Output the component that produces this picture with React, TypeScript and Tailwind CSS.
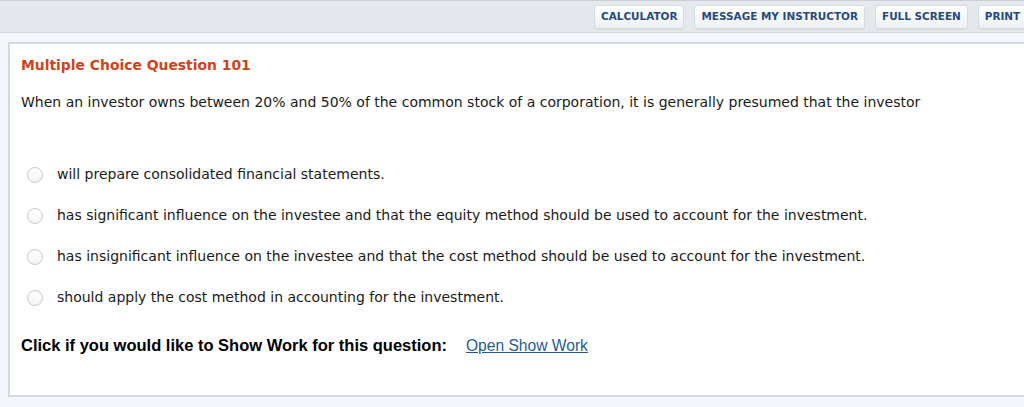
import React from "react";

const verdana = { fontFamily: '"DejaVu Sans", Verdana, sans-serif' };

function Btn({ label }: { label: string }) {
  return (
    <div className="h-[24px] px-[6px] flex items-center rounded-[3px] border border-[#d4dae1] bg-gradient-to-b from-[#ffffff] to-[#eef1f4] text-[10.45px] font-bold text-[#284a7e] whitespace-nowrap shrink-0 shadow-[0_1px_0_rgba(0,0,0,0.05)]">
      {label}
    </div>
  );
}

function Option({ text }: { text: string }) {
  return (
    <div className="flex items-center h-[41px]">
      <div className="w-[16px] h-[16px] rounded-full border border-[#c9c9c9] bg-gradient-to-b from-white to-[#f4f4f4] ml-[25px] mr-[14px] shrink-0" />
      <span className="text-[14px] text-[#1a1a1a]">{text}</span>
    </div>
  );
}

export default function App() {
  return (
    <div className="w-[1024px] h-[407px] overflow-hidden bg-[#f3f7fb]" style={verdana}>
      <div className="h-[33px] bg-[#e5e9ee] border-t border-[#c9d0d8] border-b border-b-[#d3d9e0] flex items-center justify-start gap-[10px] pl-[594px] overflow-hidden">
        <Btn label="CALCULATOR" />
        <Btn label="MESSAGE MY INSTRUCTOR" />
        <Btn label="FULL SCREEN" />
        <Btn label="PRINT" />
      </div>
      <div className="mt-[9px] ml-[8px] h-[355px] bg-white border-l-2 border-t-2 border-b-2 border-[#d3d8df] pl-[11px] pt-[11px]">
        <div className="text-[13.9px] font-bold text-[#d0421b] leading-[20px]">Multiple Choice Question 101</div>
        <div className="mt-[17px] text-[14px] text-[#1a1a1a] leading-[20px] whitespace-nowrap">
          When an investor owns between 20% and 50% of the common stock of a corporation, it is generally presumed that the investor
        </div>
        <div className="mt-[42px] -ml-[19px]">
          <Option text="will prepare consolidated financial statements." />
          <Option text="has significant influence on the investee and that the equity method should be used to account for the investment." />
          <Option text="has insignificant influence on the investee and that the cost method should be used to account for the investment." />
          <Option text="should apply the cost method in accounting for the investment." />
        </div>
        <div className="mt-[15px] flex items-center" style={{ fontFamily: '"Liberation Sans", Arial, sans-serif' }}>
          <span className="font-bold text-black text-[16.5px]">Click if you would like to Show Work for this question:</span>
          <a className="ml-[19px] text-[#1f5c99] underline text-[15.6px]" href="#">Open Show Work</a>
        </div>
      </div>
    </div>
  );
}
